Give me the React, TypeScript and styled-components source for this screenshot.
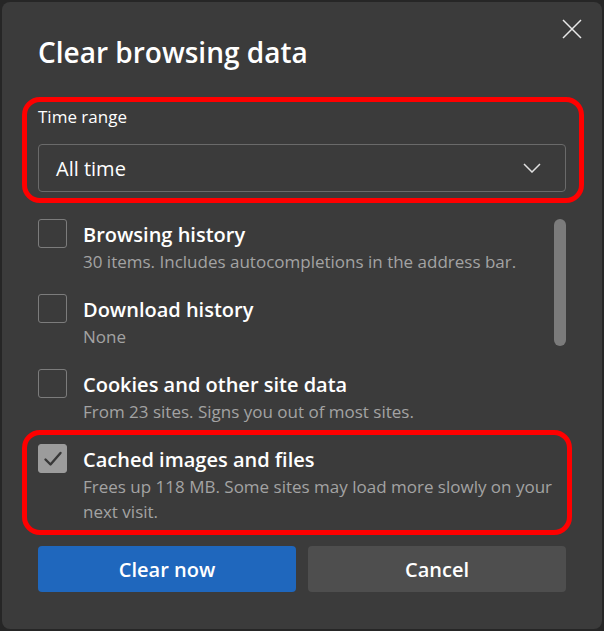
import React from "react";
import styled, { createGlobalStyle } from "styled-components";

const Global = createGlobalStyle`
  html, body { margin: 0; padding: 0; background: #262626; }
  body { font-family: "Open Sans", "Noto Sans", sans-serif; }
  * { box-sizing: border-box; }
`;

const Page = styled.div`
  width: 604px;
  height: 631px;
  padding: 2px;
  background: #262626;
`;

const Dialog = styled.div`
  width: 600px;
  height: 627px;
  background: #3b3b3b;
  border-radius: 8px;
  padding: 30px 36px 0 36px;
  display: flex;
  flex-direction: column;
  color: #ffffff;
`;

const Header = styled.div`
  display: flex;
  justify-content: space-between;
  align-items: flex-start;
`;

const Title = styled.h1`
  margin: 0;
  font-size: 28px;
  line-height: 40px;
  font-weight: 600;
  color: #ffffff;
`;

const CloseButton = styled.button`
  margin: -16px -19px 0 0;
  width: 26px;
  height: 26px;
  padding: 0;
  border: none;
  background: transparent;
  display: flex;
  align-items: center;
  justify-content: center;
  cursor: pointer;
`;

const Highlight = styled.div<{ $left: number; $right: number; $top: number; $bottom: number; $mt?: number }>`
  position: relative;
  margin-top: ${(p) => p.$mt ?? 0}px;
  &::after {
    content: "";
    position: absolute;
    left: ${(p) => -p.$left}px;
    right: ${(p) => -p.$right}px;
    top: ${(p) => -p.$top}px;
    bottom: ${(p) => -p.$bottom}px;
    border: 5px solid #ff0000;
    border-radius: 18px;
    pointer-events: none;
  }
`;

const RangeSection = styled.div`
  display: flex;
  flex-direction: column;
`;

const Label = styled.div`
  font-size: 17px;
  line-height: 22px;
  color: #ffffff;
`;

const Select = styled.div`
  margin-top: 16px;
  height: 48px;
  border: 1px solid #6a6a6a;
  border-radius: 4px;
  display: flex;
  align-items: center;
  justify-content: space-between;
  padding: 0 24px 0 17px;
  font-size: 20px;
  color: #ffffff;
`;

const ListArea = styled.div`
  margin-top: 26px;
  display: flex;
  height: 310px;
`;

const Items = styled.div`
  flex: 1;
  display: flex;
  flex-direction: column;
  gap: 19px;
`;

const Row = styled.div`
  display: flex;
  gap: 16px;
  align-items: flex-start;
`;

const Box = styled.div<{ $checked?: boolean }>`
  flex: none;
  width: 29px;
  height: 29px;
  margin-top: 1px;
  border-radius: 3px;
  border: 1px solid ${(p) => (p.$checked ? "#9c9c9c" : "#7c7c7c")};
  background: ${(p) => (p.$checked ? "#9c9c9c" : "transparent")};
  display: flex;
  align-items: center;
  justify-content: center;
`;

const Texts = styled.div`
  display: flex;
  flex-direction: column;
  padding-top: 3px;
`;

const ItemTitle = styled.div`
  font-size: 20px;
  line-height: 28px;
  font-weight: 600;
  color: #ffffff;
`;

const ItemDesc = styled.div`
  font-size: 17px;
  line-height: 25px;
  color: #a3a3a3;
`;

const Track = styled.div`
  width: 12px;
  flex: none;
  padding-top: 1px;
`;

const Thumb = styled.div`
  width: 12px;
  height: 127px;
  border-radius: 6px;
  background: #7b7b7b;
`;

const Actions = styled.div`
  margin-top: 18px;
  display: grid;
  grid-template-columns: 1fr 1fr;
  gap: 12px;
`;

const Button = styled.button<{ $primary?: boolean }>`
  height: 46px;
  border: none;
  border-radius: 4px;
  background: ${(p) => (p.$primary ? "#1f67bd" : "#4e4e4e")};
  color: #ffffff;
  font-family: inherit;
  font-size: 20px;
  font-weight: 600;
  cursor: pointer;
`;

type Item = { title: string; desc: string; checked?: boolean; highlight?: boolean };

const items: Item[] = [
  { title: "Browsing history", desc: "30 items. Includes autocompletions in the address bar." },
  { title: "Download history", desc: "None" },
  { title: "Cookies and other site data", desc: "From 23 sites. Signs you out of most sites." },
  {
    title: "Cached images and files",
    desc: "Frees up 118 MB. Some sites may load more slowly on your next visit.",
    checked: true,
    highlight: true,
  },
];

const Check = () => (
  <svg width="20" height="20" viewBox="0 0 20 20" fill="none">
    <path d="M2.5 10.5 L7.5 15.5 L17.5 4" stroke="#383838" strokeWidth="2.4" strokeLinecap="round" strokeLinejoin="round" />
  </svg>
);

const ItemRow = ({ item }: { item: Item }) => {
  const row = (
    <Row>
      <Box $checked={item.checked}>{item.checked && <Check />}</Box>
      <Texts>
        <ItemTitle>{item.title}</ItemTitle>
        <ItemDesc>{item.desc}</ItemDesc>
      </Texts>
    </Row>
  );
  return item.highlight ? (
    <Highlight $left={16} $right={18} $top={13} $bottom={11}>
      {row}
    </Highlight>
  ) : (
    row
  );
};

export default function App() {
  return (
    <>
      <Global />
      <Page>
        <Dialog>
          <Header>
            <Title>Clear browsing data</Title>
            <CloseButton aria-label="Close">
              <svg width="20" height="20" viewBox="0 0 20 20" fill="none">
                <path d="M1 1 L19 19 M19 1 L1 19" stroke="#e8e8e8" strokeWidth="1.5" />
              </svg>
            </CloseButton>
          </Header>
          <Highlight $left={16} $right={18} $top={9} $bottom={11} $mt={34}>
            <RangeSection>
              <Label>Time range</Label>
              <Select>
                <span>All time</span>
                <svg width="18" height="10" viewBox="0 0 18 10" fill="none">
                  <path d="M1 1 L9 9 L17 1" stroke="#e0e0e0" strokeWidth="1.5" />
                </svg>
              </Select>
            </RangeSection>
          </Highlight>
          <ListArea>
            <Items>
              {items.map((it) => (
                <ItemRow key={it.title} item={it} />
              ))}
            </Items>
            <Track>
              <Thumb />
            </Track>
          </ListArea>
          <Actions>
            <Button $primary>Clear now</Button>
            <Button>Cancel</Button>
          </Actions>
        </Dialog>
      </Page>
    </>
  );
}
